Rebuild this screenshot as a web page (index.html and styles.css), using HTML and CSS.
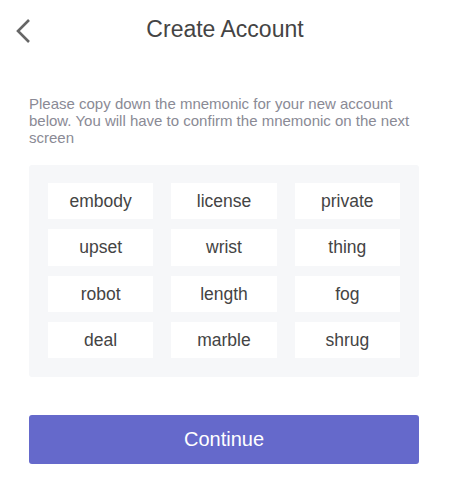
FILE: index.html
```html
<!DOCTYPE html>
<html>
<head>
  <title>Create Account</title>
  <link rel="stylesheet" href="styles.css">
</head>
<body>
  <div class="header">
    <button class="back-button" aria-label="Back">
      <svg width="18" height="28" viewBox="0 0 18 28">
        <path d="M15 3 L4 14 L15 25" fill="none" stroke="#666" stroke-width="2.6"/>
      </svg>
    </button>
    <h1>Create Account</h1>
  </div>

  <div class="content">
    <p class="hint">Please copy down the mnemonic for your new account below. You will have to confirm the mnemonic on the next screen</p>

    <div class="mnemonic-box">
      <div class="word">embody</div>
      <div class="word">license</div>
      <div class="word">private</div>
      <div class="word">upset</div>
      <div class="word">wrist</div>
      <div class="word">thing</div>
      <div class="word">robot</div>
      <div class="word">length</div>
      <div class="word">fog</div>
      <div class="word">deal</div>
      <div class="word">marble</div>
      <div class="word">shrug</div>
    </div>

    <button class="continue-button">Continue</button>
  </div>
</body>
</html>
```

FILE: styles.css
```css
body {
  margin: 0;
  font-family: "Liberation Sans", Arial, sans-serif;
  background-color: #fff;
}

.header {
  position: relative;
  height: 60px;
}

.back-button {
  position: absolute;
  left: 14px;
  top: 17px;
  padding: 0;
  border: none;
  background: none;
  cursor: pointer;
}

.back-button svg {
  display: block;
}

h1 {
  margin: 0;
  padding-top: 16px;
  font-size: 23px;
  font-weight: normal;
  color: #444;
  text-align: center;
}

.content {
  padding: 35px 31px 0 29px;
}

.hint {
  margin: 0 0 19px;
  font-size: 15px;
  line-height: 17px;
  color: #8a8a95;
}

.mnemonic-box {
  display: grid;
  grid-template-columns: repeat(3, 1fr);
  column-gap: 18px;
  row-gap: 10px;
  padding: 18px 19px 19px;
  background-color: #f6f7f9;
  border-radius: 3px;
}

.word {
  height: 36.3px;
  line-height: 36px;
  font-size: 17.5px;
  color: #444;
  text-align: center;
  background-color: #fff;
}

.continue-button {
  display: block;
  width: 100%;
  height: 49px;
  margin-top: 38px;
  font-family: inherit;
  font-size: 20px;
  color: #fff;
  background-color: #6569cb;
  border: none;
  border-radius: 3px;
  cursor: pointer;
}
```
